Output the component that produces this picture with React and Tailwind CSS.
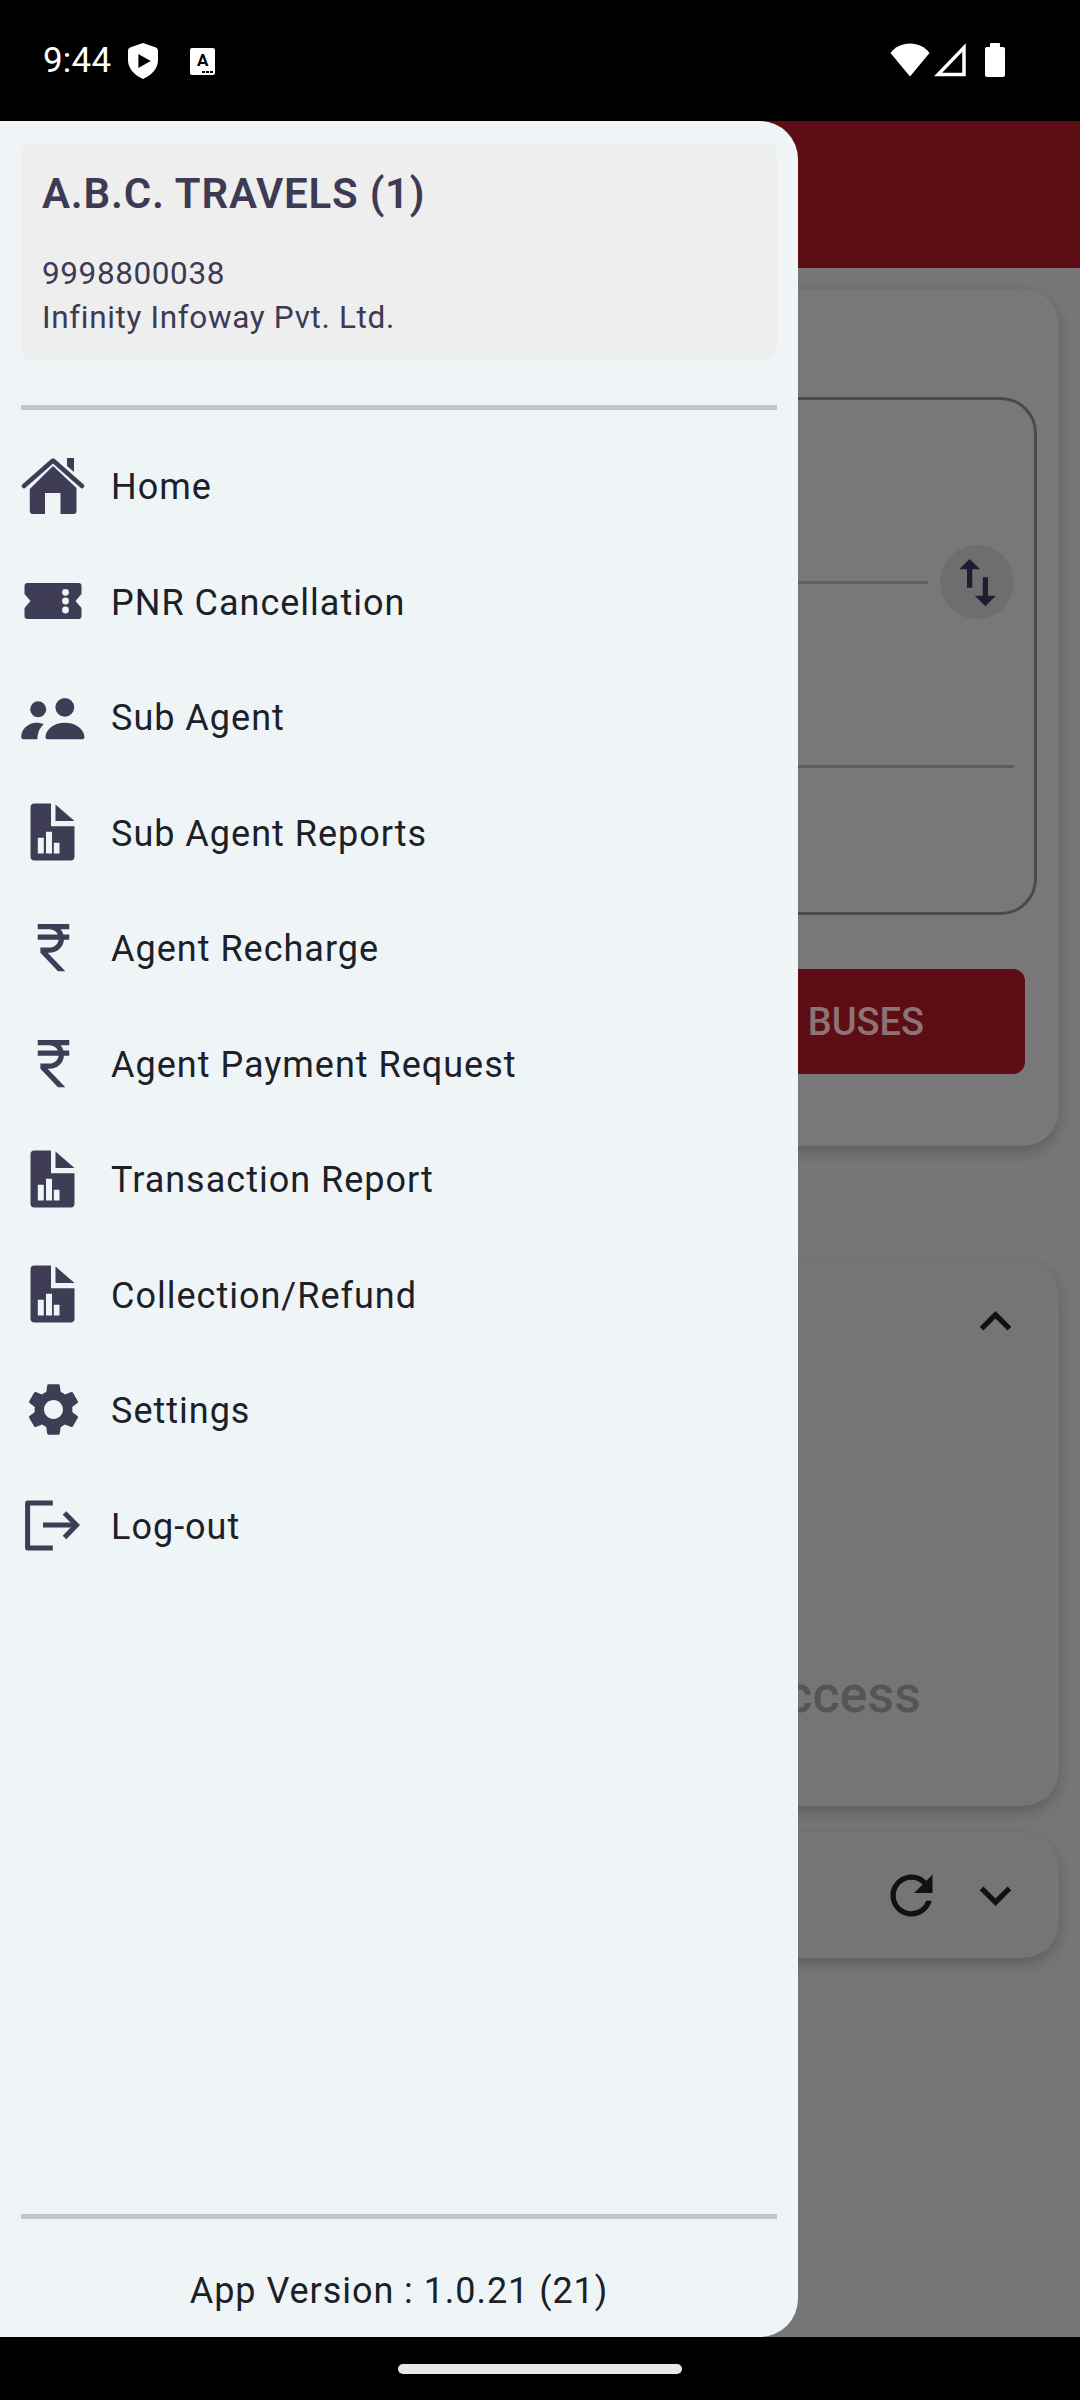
import { MdSettings, MdCurrencyRupee, MdSwapVert, MdKeyboardArrowUp, MdKeyboardArrowDown, MdRefresh } from 'react-icons/md'

const ICON = '#3f3d56'

function HomeIcon() {
  return (
    <svg width="64" height="64" viewBox="0 0 64 64" fill={ICON}>
      <path d="M46 4h7v14l-7-6z" />
      <path d="M3 32 32 6.5 61 32" fill="none" stroke={ICON} strokeWidth="4.5" strokeLinecap="round" strokeLinejoin="round" />
      <path fillRule="evenodd" d="M32 12 55.5 34v23a3 3 0 0 1-3 3H39.5V39H24v21H11.8a3 3 0 0 1-3-3V35z" />
    </svg>
  )
}

function TicketIcon() {
  return (
    <svg width="64" height="64" viewBox="0 0 64 64" fill={ICON}>
      <path d="M6.5 14h51a3 3 0 0 1 3 3v8l-6 7 6 7v8a3 3 0 0 1-3 3h-51a3 3 0 0 1-3-3v-8l6-7-6-7v-8a3 3 0 0 1 3-3z" />
      <circle cx="44.5" cy="23.3" r="3.4" fill="#eff4f7" />
      <circle cx="44.5" cy="32" r="3.4" fill="#eff4f7" />
      <circle cx="44.5" cy="41" r="3.4" fill="#eff4f7" />
    </svg>
  )
}

function PeopleIcon() {
  return (
    <svg width="64" height="64" viewBox="0 0 64 64" fill={ICON}>
      <circle cx="17.2" cy="24.3" r="8" />
      <circle cx="43.8" cy="22.3" r="9.4" />
      <path d="M0.2 52c0-8 7-14.3 15.5-14.3 2.8 0 5 .5 7 1.5-3.6 3.2-6 7.4-6.4 15.1H2.5a2.3 2.3 0 0 1-2.3-2.3z" />
      <path d="M24.5 52.5c0-8.5 8.7-14.8 19.5-14.8s19.5 6.3 19.5 14.8a2 2 0 0 1-2 1.8H26.5a2 2 0 0 1-2-1.8z" />
    </svg>
  )
}

function ReportIcon() {
  return (
    <svg width="64" height="64" viewBox="0 0 64 64" fill={ICON}>
      <path fillRule="evenodd" d="M13.5 3.5H30v22.7h23.5V56.5a4 4 0 0 1-4 4h-36a4 4 0 0 1-4-4v-49a4 4 0 0 1 4-4zM16.8 37.8v15.7h6V37.8zM25 31.8v21.7h6V31.8zM32.8 42.8v10.7h5.7V42.8z" />
      <path d="M34.5 4.5 53.5 21h-19z" />
    </svg>
  )
}

function LogoutIcon() {
  return (
    <svg width="64" height="64" viewBox="0 0 64 64" fill="none" stroke={ICON} strokeWidth="5">
      <path d="M31.8 10H6.600v45h25.200" strokeLinejoin="round" />
      <path d="M22 32h33" />
      <path d="M43.500 20 55.500 32 43.500 44.500" />
    </svg>
  )
}

const MENU = [
  { label: 'Home', icon: <HomeIcon /> },
  { label: 'PNR Cancellation', icon: <TicketIcon /> },
  { label: 'Sub Agent', icon: <PeopleIcon /> },
  { label: 'Sub Agent Reports', icon: <ReportIcon /> },
  { label: 'Agent Recharge', icon: <MdCurrencyRupee size={63} color={ICON} /> },
  { label: 'Agent Payment Request', icon: <MdCurrencyRupee size={63} color={ICON} /> },
  { label: 'Transaction Report', icon: <ReportIcon /> },
  { label: 'Collection/Refund', icon: <ReportIcon /> },
  { label: 'Settings', icon: <MdSettings size={63} color={ICON} /> },
  { label: 'Log-out', icon: <LogoutIcon /> },
]

function StatusBar() {
  return (
    <div className="h-[121px] bg-black text-white flex items-start justify-between pt-[43px] pl-[43px] pr-[75px]">
      <div className="flex items-center">
        <span className="text-[35px] leading-[36px] tracking-[0.2px]">9:44</span>
        {/* play protect */}
        <svg className="ml-[17px]" width="30" height="36" viewBox="0 0 29 36" preserveAspectRatio="none">
          <path d="M14.500 0 27 4.500q2 .8 2 3V17c0 8-5.500 15-14.500 19C5.500 32 0 25 0 17V7.500q0-2.200 2-3z" fill="#fff" />
          <path d="M10 11v14l12-7z" fill="#000" />
        </svg>
        <div className="ml-[32px] w-[25px] h-[27px] bg-white rounded-[2px] text-black flex flex-col items-center">
          <span className="font-bold text-[17px] leading-[21px] mt-[2px]">A</span>
          <div className="flex gap-[1px] self-end mr-[2px]">
            <div className="w-[3px] h-[2px] bg-black" />
            <div className="w-[3px] h-[2px] bg-black" />
            <div className="w-[3px] h-[2px] bg-black" />
          </div>
        </div>
      </div>
      <div className="flex items-center gap-[3px]">
        <svg width="42" height="34" viewBox="0 0 42 34">
          <path d="M21 33.500 1.500 10C6 4 13 .500 21 .500s15 3.500 19.500 9.500z" fill="#fff" />
        </svg>
        <svg width="32" height="34" viewBox="0 0 32 34">
          <path d="M30 4.500V31.500H4z" fill="none" stroke="#fff" strokeWidth="3.500" />
        </svg>
        <div className="ml-[16px] w-[20px] h-[34px] flex flex-col items-center">
          <div className="w-[10px] h-[4px] bg-white rounded-t-[1px]" />
          <div className="w-[20px] h-[30px] bg-white rounded-[2px]" />
        </div>
      </div>
    </div>
  )
}

function Backdrop() {
  return (
    <div className="h-[2216px] bg-[#777777] flex flex-col">
      <div className="h-[147px] bg-[#5c0e14] shrink-0" />
      <div className="mt-[21px] mr-[21px] h-[857px] rounded-r-[36px] bg-[#787878] shadow-[0_6px_16px_rgba(0,0,0,0.22)] pt-[108px] pr-[22px]">
        <div className="h-[518px] rounded-r-[36px] border-[3px] border-l-0 border-[#4a4a4a] pt-[145px] pr-[20px]">
          <div className="flex items-center">
            <div className="w-[928px] h-[3px] bg-[#606060]" />
            <div className="ml-[12px] w-[74px] h-[74px] rounded-full bg-[#6e6e6e] flex items-center justify-center">
              <MdSwapVert size={63} color="#1e1c30" />
            </div>
          </div>
          <div className="mt-[146px] h-[3px] bg-[#5c5c5c]" />
        </div>
        <div className="mt-[54px] mr-[12px] h-[105px] rounded-r-[12px] bg-[#5c0e14] flex items-center justify-end pr-[101px] pt-[2px]">
          <span className="text-[38px] font-medium text-[#8d7377]">BUSES</span>
        </div>
      </div>
      <div className="mt-[114px] mr-[21px] h-[546px] rounded-r-[36px] bg-[#757575] shadow-[0_6px_16px_rgba(0,0,0,0.22)] flex flex-col items-end pr-[32px] pt-[30px]">
        <MdKeyboardArrowUp size={63} color="#111111" />
        <div className="mt-[312px] pr-[106px] text-[52px] leading-[60px] font-medium text-[#555555]">ccess</div>
      </div>
      <div className="mt-[26px] mr-[21px] h-[126px] rounded-r-[36px] bg-[#757575] shadow-[0_6px_16px_rgba(0,0,0,0.22)] flex items-center justify-end pr-[32px] gap-[21px]">
        <MdRefresh size={63} color="#111111" />
        <MdKeyboardArrowDown size={63} color="#111111" />
      </div>
    </div>
  )
}

function Drawer() {
  return (
    <aside className="absolute left-0 top-[121px] h-[2216px] w-[798px] bg-[#eff4f7] rounded-r-[38px] flex flex-col px-[21px]">
      <div className="mt-[22px] h-[217px] bg-[#eeeeee] rounded-[10px] px-[21px] pt-[27px] text-[#3d3a54]">
        <div className="text-[42px] leading-[48px] font-semibold tracking-[0.78px]">A.B.C. TRAVELS (1)</div>
        <div className="mt-[34px] text-[31.500px] leading-[44px] tracking-[0.6px]">9998800038</div>
        <div className="text-[31.500px] leading-[44px] tracking-[0.65px]">Infinity Infoway Pvt. Ltd.</div>
      </div>
      <div className="mt-[45px] h-[5px] bg-[#bec8cc] shrink-0" />
      <ul className="mt-[18px] flex flex-col">
        {MENU.map(({ label, icon }) => (
          <li key={label} className="h-[115.500px] flex items-center">
            <span className="w-[64px] h-[64px] flex items-center justify-center shrink-0">{icon}</span>
            <span className="ml-[26px] pt-[3px] text-[36px] tracking-[1px] text-[#1c2127]">{label}</span>
          </li>
        ))}
      </ul>
      <div className="mt-auto h-[5px] bg-[#bec8cc] shrink-0" />
      <div className="h-[118px] flex items-center justify-center text-[36px] tracking-[0.95px] text-[#1c2127] pt-[26px]">App Version : 1.0.21 (21)</div>
    </aside>
  )
}

export default function App() {
  return (
    <div className="relative w-[1080px] h-[2400px] bg-black overflow-hidden" style={{ fontFamily: 'Roboto, sans-serif' }}>
      <StatusBar />
      <Backdrop />
      <Drawer />
      <div className="h-[63px] bg-black flex justify-center pt-[27px]">
        <div className="w-[284px] h-[10px] rounded-full bg-[#e8e8e8]" />
      </div>
    </div>
  )
}
